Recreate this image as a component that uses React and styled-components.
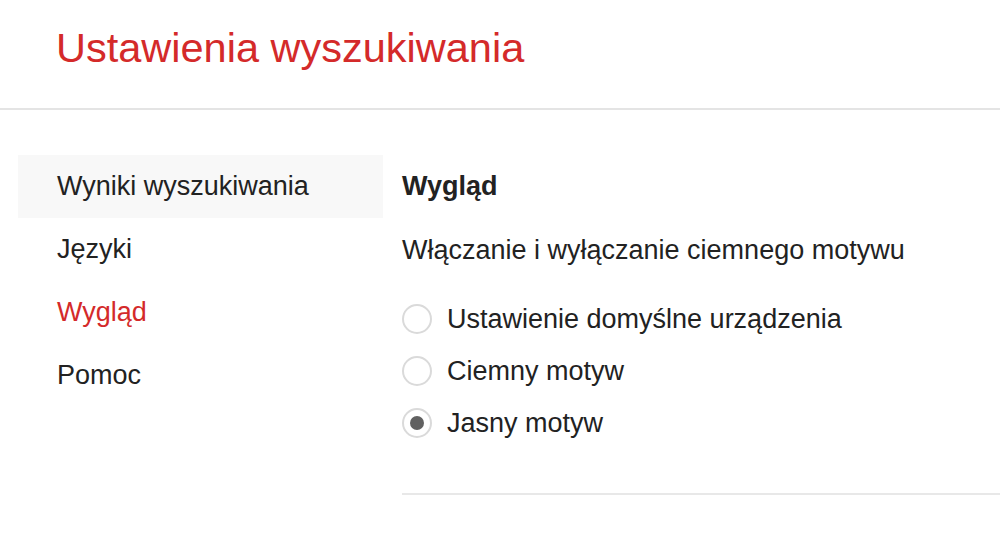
import React, { useState } from "react";
import styled, { createGlobalStyle } from "styled-components";

const GlobalStyle = createGlobalStyle`
  html, body {
    margin: 0;
    padding: 0;
    background: #fff;
  }
  body {
    font-family: "Liberation Sans", Arial, Helvetica, sans-serif;
    color: #222;
  }
`;

const MENU = ["Wyniki wyszukiwania", "Języki", "Wygląd", "Pomoc"];

const THEMES = [
  { id: "system", label: "Ustawienie domyślne urządzenia" },
  { id: "dark", label: "Ciemny motyw" },
  { id: "light", label: "Jasny motyw" },
];

function App() {
  const [theme, setTheme] = useState("light");
  const [hovered, setHovered] = useState(0);

  return (
    <>
      <GlobalStyle />
      <Page>
        <Header>
          <Title>Ustawienia wyszukiwania</Title>
        </Header>

        <Body>
          <Sidebar>
            {MENU.map((item, i) => (
              <MenuItem
                key={item}
                $active={item === "Wygląd"}
                $hover={hovered === i}
                onMouseEnter={() => setHovered(i)}
              >
                {item}
              </MenuItem>
            ))}
          </Sidebar>

          <Main>
            <SectionTitle>Wygląd</SectionTitle>
            <Description>Włączanie i wyłączanie ciemnego motywu</Description>

            <Options>
              {THEMES.map((t) => (
                <Option key={t.id} onClick={() => setTheme(t.id)}>
                  <Radio $checked={theme === t.id} />
                  <OptionLabel>{t.label}</OptionLabel>
                </Option>
              ))}
            </Options>

            <Divider />
          </Main>
        </Body>
      </Page>
    </>
  );
}

export default App;

const Page = styled.div`
  width: 100%;
  min-height: 100vh;
`;

// 상단 제목
const Header = styled.header`
  padding: 24px 56px 36px;
  border-bottom: 2px solid #e4e4e4;
`;

const Title = styled.h1`
  margin: 0;
  font-size: 41.5px;
  line-height: 48px;
  font-weight: 400;
  color: #d42a2a;
`;

const Body = styled.div`
  display: flex;
  gap: 19px;
  padding: 45px 0 0 18px;
`;

// 왼쪽 메뉴
const Sidebar = styled.nav`
  display: flex;
  flex-direction: column;
  width: 365px;
  flex-shrink: 0;
`;

const MenuItem = styled.div`
  height: 63px;
  line-height: 63px;
  padding-left: 39px;
  font-size: 27px;
  color: ${(p) => (p.$active ? "#d42a2a" : "#222")};
  background-color: ${(p) => (p.$hover ? "#f8f8f8" : "transparent")};
  cursor: pointer;
`;

// 오른쪽 내용
const Main = styled.section`
  display: flex;
  flex-direction: column;
  flex: 1;
`;

const SectionTitle = styled.h2`
  margin: 0;
  height: 63px;
  line-height: 63px;
  font-size: 27px;
  font-weight: 700;
  color: #222;
`;

const Description = styled.p`
  margin: 0;
  height: 63px;
  line-height: 65px;
  font-size: 27px;
  color: #222;
`;

const Options = styled.div`
  display: flex;
  flex-direction: column;
  margin-top: 12px;
`;

const Option = styled.label`
  display: flex;
  align-items: center;
  gap: 15px;
  height: 52px;
  cursor: pointer;
`;

const Radio = styled.span`
  display: flex;
  align-items: center;
  justify-content: center;
  box-sizing: border-box;
  width: 30px;
  height: 30px;
  border: 2px solid #dadada;
  border-radius: 50%;
  background: #fff;
  &::after {
    content: "";
    display: ${(p) => (p.$checked ? "block" : "none")};
    width: 14px;
    height: 14px;
    border-radius: 50%;
    background: #616161;
  }
`;

const OptionLabel = styled.span`
  font-size: 27px;
  color: #222;
`;

const Divider = styled.hr`
  margin: 44px 0 0;
  border: none;
  border-top: 2px solid #e8e8e8;
`;
